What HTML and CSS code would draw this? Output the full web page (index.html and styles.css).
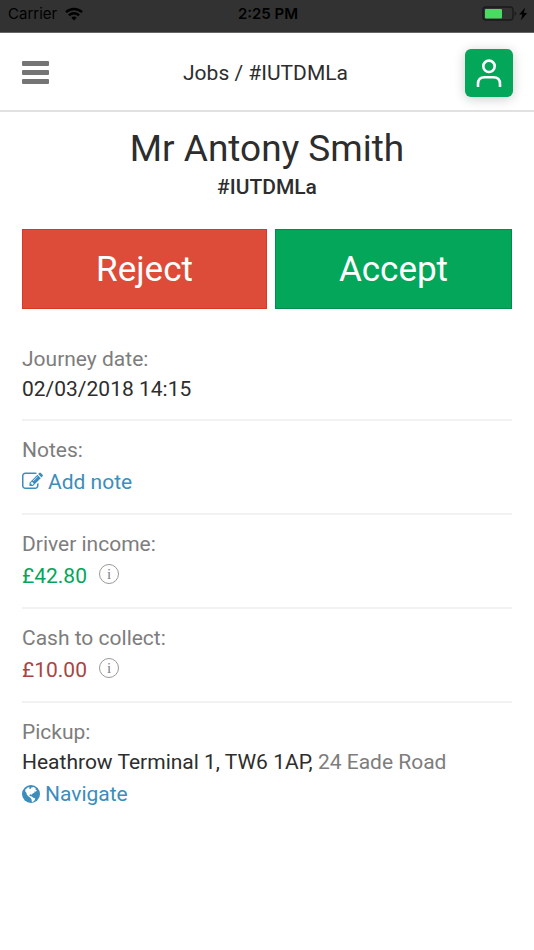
FILE: index.html
```html
<!DOCTYPE html>
<html lang="en">
<head>
<meta charset="utf-8">
<meta name="viewport" content="width=device-width, initial-scale=1">
<title>Jobs / #IUTDMLa</title>
<link rel="stylesheet" href="styles.css">
</head>
<body>
<div class="status">
  <div class="status-left">
    <span>Carrier</span>
    <svg class="wifi" width="18" height="14" viewBox="0 0 18 14" fill="none" stroke="#000" stroke-width="2.4" aria-hidden="true"><path d="M1 5.2a11.5 11.5 0 0 1 16 0M3.9 8.3a7.3 7.3 0 0 1 10.2 0"/><path d="M9 13.6l-2.7-2.9a4 4 0 0 1 5.4 0z" fill="#000" stroke="none"/></svg>
  </div>
  <span class="clock">2:25 PM</span>
  <div class="status-right">
    <svg width="46" height="16" viewBox="0 0 46 16" aria-hidden="true"><rect x="1" y="1" width="30" height="13" rx="3" fill="none" stroke="#1a1a1a" stroke-width="1.4"/><rect x="3" y="3" width="17" height="9.5" rx="1" fill="#4cd964"/><path d="M32.6 5.4q1.6.6 1.6 2.2t-1.6 2.2z" fill="#1a1a1a"/><path d="M43.2 1.4l-6 7.2h3.2l-1.6 5.8 6.4-7.400h-3.400z" fill="#000"/></svg>
  </div>
</div>
<header class="topbar">
  <button class="menu" type="button" aria-label="Menu">
    <svg width="27" height="23" viewBox="0 0 27 23" fill="#757575" aria-hidden="true"><rect width="27" height="5" rx="1"/><rect y="9" width="27" height="5" rx="1"/><rect y="18" width="27" height="5" rx="1"/></svg>
  </button>
  <div class="crumb">Jobs / #IUTDMLa</div>
  <button class="profile" type="button" aria-label="Profile">
    <svg width="48" height="48" viewBox="0 0 48 48" fill="none" stroke="#fff" stroke-width="2.6" aria-hidden="true"><circle cx="24" cy="17.3" r="5.700"/><path d="M13 38v-3q0-6.700 6.700-6.700h8.600q6.700 0 6.700 6.700v3"/></svg>
  </button>
</header>
<main class="job">
  <h1>Mr Antony Smith</h1>
  <p class="ref">#IUTDMLa</p>
  <div class="actions">
    <button class="action reject" type="button">Reject</button>
    <button class="action accept" type="button">Accept</button>
  </div>
  <section class="item">
    <div class="label">Journey date:</div>
    <div class="value">02/03/2018 14:15</div>
  </section>
  <section class="item">
    <div class="label">Notes:</div>
    <a class="line link" href="#note"><svg width="21" height="21" viewBox="0 0 1792 1792" fill="currentColor" aria-hidden="true"><path d="M888 1184l116-116-152-152-116 116v56h96v96h56zm440-720q-16-16-33 1l-350 350q-17 17-1 33t33-1l350-350q17-17 1-33zm80 594v190q0 119-84.500 203.500t-203.500 84.500h-832q-119 0-203.500-84.500t-84.500-203.500v-832q0-119 84.500-203.500t203.500-84.500h832q63 0 117 25 15 7 18 23 3 17-9 29l-49 49q-14 14-32 8-23-6-45-6h-832q-66 0-113 47t-47 113v832q0 66 47 113t113 47h832q66 0 113-47t47-113v-126q0-13 9-22l64-64q15-15 35-7t20 29zm-96-738l288 288-672 672h-288v-288zm444 132l-92 92-288-288 92-92q28-28 68-28t68 28l152 152q28 28 28 68t-28 68z"/></svg><span>Add note</span></a>
  </section>
  <section class="item">
    <div class="label">Driver income:</div>
    <div class="line income"><span>£42.80</span><button class="info" type="button" aria-label="About driver income">i</button></div>
  </section>
  <section class="item">
    <div class="label">Cash to collect:</div>
    <div class="line cash"><span>£10.00</span><button class="info" type="button" aria-label="About cash to collect">i</button></div>
  </section>
  <section class="item">
    <div class="label">Pickup:</div>
    <div class="value">Heathrow Terminal 1, TW6 1AP, <span class="muted">24 Eade Road</span></div>
    <a class="line link" href="#navigate"><svg width="18" height="18" viewBox="0 0 18 18" aria-hidden="true"><circle cx="9" cy="9" r="9" fill="currentColor"/><path d="M3.600 4.300l2.500-2 1.700.2-.7 1.200 1.600.3.6-1.600 2.300-.4 2.200 1.200-.6 1 1.600 1-.8 1.500-1.300-.4-.4 1.500-1.600.6-1 1.300-1.600-.5-.9 1 .9.9 1.600.5 1.700 1.200 1.900.7-.8 2-1.800 1.500-.9-.3-.3-2.500-1.300-1.600-1.900-1.300-1.500-1.700-.5-2-1.200-1.300z" fill="#fff"/></svg><span>Navigate</span></a>
  </section>
</main>
</body>
</html>
```
FILE: styles.css
```css
* {
  box-sizing: border-box;
}

body {
  margin: 0;
  background: #fff;
  color: #2d2d2d;
  font: 21px/30px Roboto, sans-serif;
}

button {
  padding: 0;
  border: 0;
  background: none;
  font-family: inherit;
  cursor: pointer;
}

svg {
  display: block;
  flex: none;
}

.status {
  display: grid;
  grid-template-columns: 1fr auto 1fr;
  align-items: center;
  height: 33px;
  padding: 0 6px 4px 8px;
  border-bottom: 1px solid #666;
  background: #323232;
  color: #000;
  font: 15px/20px Inter, sans-serif;
}

.status-left {
  display: flex;
  align-items: center;
  gap: 8px;
}

.clock {
  font-weight: 600;
}

.status-right {
  justify-self: end;
}

.topbar {
  display: grid;
  grid-template-columns: 48px 1fr 48px;
  align-items: center;
  height: 79px;
  padding: 2px 21px 0 22px;
  border-bottom: 2px solid #e1e1e1;
}

.crumb {
  padding-right: 4px;
  text-align: center;
}

.profile {
  width: 48px;
  height: 48px;
  border-radius: 6px;
  background: #04a65a;
  box-shadow: 0 2px 12px rgba(0, 0, 0, 0.2);
}

.job {
  padding: 16px 22px;
}

h1 {
  margin: 0;
  font-size: 37px;
  line-height: 42px;
  font-weight: 400;
  text-align: center;
}

.ref {
  margin: 2px 0 27px;
  font-weight: 500;
  text-align: center;
}

.actions {
  display: grid;
  grid-template-columns: 245fr 237fr;
  gap: 8px;
  margin-bottom: 21px;
}

.action {
  height: 80px;
  border: 1px solid;
  color: #fff;
  font-size: 35px;
}

.reject {
  border-color: #d73925;
  background: #dd4b39;
}

.accept {
  border-color: #008d4c;
  background: #04a65a;
}

.item {
  padding: 14px 0 15px;
  border-bottom: 2px solid #f2f2f2;
}

.item:last-child {
  border-bottom: 0;
}

.label,
.muted {
  color: #7d7d7d;
}

.line {
  display: flex;
  align-items: center;
  height: 33px;
}

.link {
  gap: 5px;
  color: #3c8dbc;
  text-decoration: none;
}

.income {
  color: #04a65a;
}

.cash {
  color: #a94442;
}

.info {
  width: 20px;
  height: 20px;
  margin: 0 0 3px 12px;
  border: 1px solid #999;
  border-radius: 50%;
  color: #808080;
  font: 15px/18px "Liberation Serif", serif;
}
```
